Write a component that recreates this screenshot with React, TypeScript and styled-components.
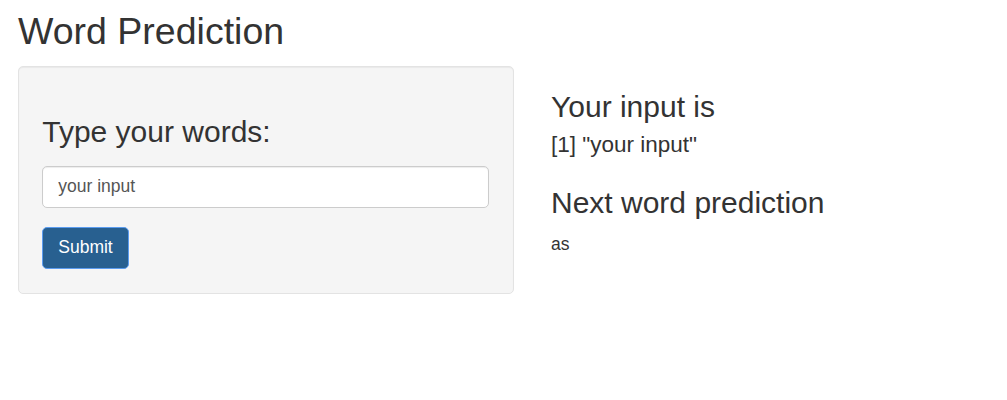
import React, {useState} from "react";
import styled, {createGlobalStyle} from "styled-components";

const GlobalStyle = createGlobalStyle`
  html, body {
    margin: 0;
    padding: 0;
    background: #fff;
  }
  body {
    font-family: "Liberation Sans", Arial, sans-serif;
    font-size: 17.5px;
    line-height: 1.42857;
    color: #333;
  }
  * {
    box-sizing: border-box;
  }
`;

const Page = styled.div`
  padding: 0 18px;
`;

const Title = styled.h2`
  font-size: 37.5px;
  font-weight: 500;
  line-height: 1.1;
  margin: 11px 0 13.5px;
`;

const Row = styled.div`
  display: flex;
  margin: 0 -18px;
`;

const Side = styled.div`
  width: 532px;
  padding: 0 18px;
`;

const Main = styled.div`
  flex: 1;
  padding: 0 19px;
`;

const Well = styled.form`
  min-height: 25px;
  padding: 23.75px 23.75px 23.75px 23.25px;
  background: #f5f5f5;
  border: 1px solid #e3e3e3;
  border-radius: 5px;
  box-shadow: inset 0 1px 1px rgba(0, 0, 0, .05);
`;

const Heading = styled.h3<{ $top?: number; $bottom?: number }>`
  font-size: 30px;
  font-weight: 500;
  line-height: 1.1;
  margin: ${p => p.$top ?? 24}px 0 ${p => p.$bottom ?? 12.5}px;
`;

const Field = styled.input`
  display: block;
  width: 100%;
  height: 42.5px;
  margin: 0 0 18.75px;
  padding: 7.5px 15px;
  font: inherit;
  color: #555;
  background: #fff;
  border: 1px solid #ccc;
  border-radius: 5px;
  box-shadow: inset 0 1px 1px rgba(0, 0, 0, .075);
  outline: none;
`;

const Button = styled.button`
  display: inline-block;
  padding: 7.5px 15px;
  font: inherit;
  line-height: 25px;
  color: #fff;
  background: #286090;
  border: 1px solid #5b9cf0;
  border-radius: 5px;
  cursor: pointer;
`;

const Output = styled.div`
  font-size: 22.5px;
  line-height: 32px;
`;

const Prediction = styled.div`
  line-height: 25px;
`;

export default function App() {
    const [text, setText] = useState("your input");
    const [shown, setShown] = useState("your input");

    return (
        <Page>
            <GlobalStyle/>
            <Title>Word Prediction</Title>
            <Row>
                <Side>
                    <Well onSubmit={e => {
                        e.preventDefault();
                        setShown(text);
                    }}>
                        <Heading $top={24} $bottom={18}>Type your words:</Heading>
                        <Field value={text} onChange={e => setText(e.target.value)}/>
                        <Button type="submit">Submit</Button>
                    </Well>
                </Side>
                <Main>
                    <Heading $top={24} $bottom={6}>Your input is</Heading>
                    <Output>[1] "{shown}"</Output>
                    <Heading $top={25} $bottom={13}>Next word prediction</Heading>
                    <Prediction>as</Prediction>
                </Main>
            </Row>
        </Page>
    );
}
